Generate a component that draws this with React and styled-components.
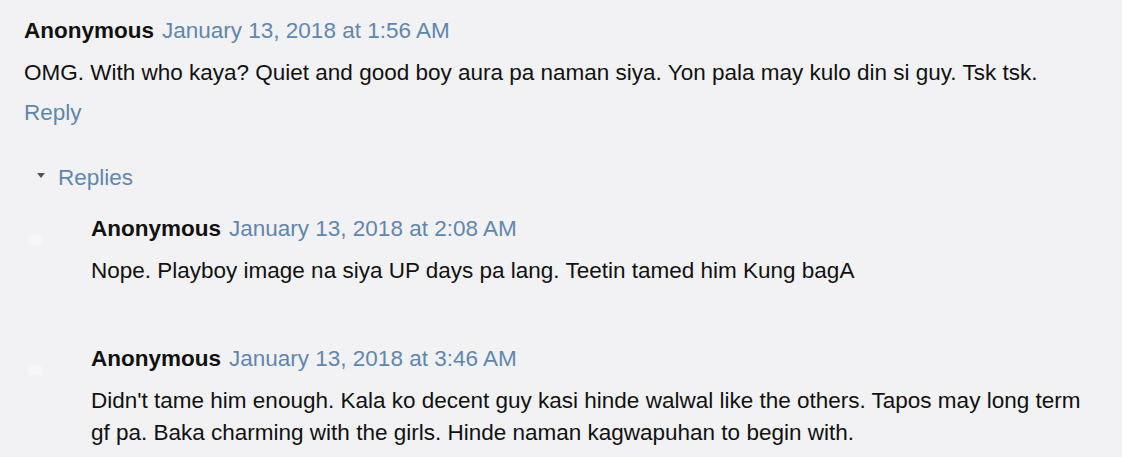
import styled, { createGlobalStyle } from 'styled-components';

const GlobalStyle = createGlobalStyle`
  html, body {
    margin: 0;
    background: #f2f2f4;
  }
  body {
    font-family: "Liberation Sans", Arial, sans-serif;
    font-size: 22.5px;
    color: #111;
  }
`;

const comment = {
  author: 'Anonymous',
  date: 'January 13, 2018 at 1:56 AM',
  body: 'OMG. With who kaya? Quiet and good boy aura pa naman siya. Yon pala may kulo din si guy. Tsk tsk.',
};

const replies = [
  {
    id: 1,
    author: 'Anonymous',
    date: 'January 13, 2018 at 2:08 AM',
    body: 'Nope. Playboy image na siya UP days pa lang. Teetin tamed him Kung bagA',
  },
  {
    id: 2,
    author: 'Anonymous',
    date: 'January 13, 2018 at 3:46 AM',
    body: "Didn't tame him enough. Kala ko decent guy kasi hinde walwal like the others. Tapos may long term gf pa. Baka charming with the girls. Hinde naman kagwapuhan to begin with.",
  },
];

const App = () => {
  return (
    <>
      <GlobalStyle />
      <Thread>
        <Comment>
          <Header>
            <Author>{comment.author}</Author>
            <DateLink>{comment.date}</DateLink>
          </Header>
          <Body>{comment.body}</Body>
          <ReplyLink>Reply</ReplyLink>
        </Comment>
        <RepliesToggle>
          <Caret />
          <span>Replies</span>
        </RepliesToggle>
        <ReplyList>
          {replies.map((r) => (
            <ReplyItem key={r.id}>
              <Avatar />
              <div>
                <Header>
                  <Author>{r.author}</Author>
                  <DateLink>{r.date}</DateLink>
                </Header>
                <Body>{r.body}</Body>
              </div>
            </ReplyItem>
          ))}
        </ReplyList>
      </Thread>
    </>
  );
};

const Thread = styled.div`
  padding: 15px 30px 0 24px;
`;

const Comment = styled.div`
  display: flex;
  flex-direction: column;
`;

const Header = styled.div`
  display: flex;
  gap: 8px;
  line-height: 32px;
`;

const Author = styled.span`
  font-weight: bold;
  color: #111;
`;

const DateLink = styled.a`
  color: #5f87ae;
  text-decoration: none;
`;

const Body = styled.div`
  margin-top: 10px;
  line-height: 32px;
`;

const ReplyLink = styled.a`
  margin-top: 8px;
  line-height: 32px;
  color: #5f87ae;
`;

const RepliesToggle = styled.div`
  display: flex;
  align-items: center;
  gap: 13px;
  margin-top: 33px;
  margin-left: 13px;
  line-height: 32px;
  color: #5f87ae;
`;

const Caret = styled.span`
  width: 0;
  height: 0;
  border-left: 4px solid transparent;
  border-right: 4px solid transparent;
  border-top: 5px solid #555;
  margin-top: -6px;
`;

const ReplyList = styled.div`
  display: flex;
  flex-direction: column;
  gap: 56px;
  margin-top: 19px;
`;

const ReplyItem = styled.div`
  display: grid;
  grid-template-columns: 67px 1fr;
`;

const Avatar = styled.div`
  width: 14px;
  height: 10px;
  margin-top: 22px;
  margin-left: 4px;
  border-radius: 2px;
  background: #f6f6f8;
`;

export default App;
